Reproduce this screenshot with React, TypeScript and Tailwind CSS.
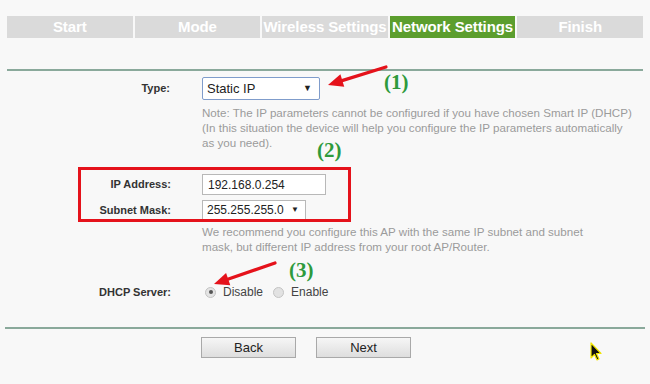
import React from "react";

const tabs = ["Start", "Mode", "Wireless Settings", "Network Settings", "Finish"];

function Arrow({ x1, y1, x2, y2 }: { x1: number; y1: number; x2: number; y2: number }) {
  const dx = x2 - x1;
  const dy = y2 - y1;
  const len = Math.sqrt(dx * dx + dy * dy);
  const ux = dx / len;
  const uy = dy / len;
  const hl = 15;
  const hw = 6.5;
  const bx = x2 - ux * hl;
  const by = y2 - uy * hl;
  const p1 = `${bx - uy * hw},${by + ux * hw}`;
  const p2 = `${bx + uy * hw},${by - ux * hw}`;
  return (
    <g>
      <line x1={x1} y1={y1} x2={bx + ux * 2} y2={by + uy * 2} stroke="#e5121b" strokeWidth={3.2} strokeLinecap="round" />
      <polygon points={`${x2},${y2} ${p1} ${p2}`} fill="#e5121b" />
    </g>
  );
}

export default function App() {
  return (
    <div
      className="relative w-[650px] h-[384px] overflow-hidden bg-[#f8f8f8] pt-[16px] text-[#333]"
      style={{ fontFamily: '"Liberation Sans", Arial, sans-serif' }}
    >
      {/* Tabs */}
      <div className="flex gap-[2px] px-[7px]">
        {tabs.map((t) => (
          <div
            key={t}
            className={
              "h-[22px] flex-1 flex items-center justify-center whitespace-nowrap text-[15px] font-bold text-white tracking-[-0.1px] " +
              (t === "Network Settings" ? "bg-[#5c9e2e]" : "bg-[#dadada]")
            }
          >
            {t}
          </div>
        ))}
      </div>

      {/* Top line */}
      <div className="mx-[7px] mt-[31px] h-[2px] bg-[#8aa99b]" />

      {/* Type row */}
      <div className="mt-[6px] flex items-center">
        <div className="w-[170px] text-right text-[11px] font-bold">Type:</div>
        <div className="ml-[32px] flex h-[23px] w-[118px] items-center justify-between rounded-[2px] border border-[#7f9ccb] bg-white pl-[4px] pr-[7px] text-[13px] text-[#222]">
          <span>Static IP</span>
          <span className="text-[9px]">▼</span>
        </div>
      </div>

      {/* Note */}
      <div className="ml-[202px] mt-[5px] w-[445px] text-[11.6px] leading-[15px] text-[#9b9b9b]">
        Note: The IP parameters cannot be configured if you have chosen Smart IP (DHCP)
        <br />
        (In this situation the device will help you configure the IP parameters automatically
        <br />
        as you need).
      </div>

      {/* IP Address */}
      <div className="mt-[24px] flex items-center">
        <div className="w-[171px] text-right text-[11px] font-bold">IP Address:</div>
        <div className="ml-[31px] flex h-[21px] w-[124px] items-center border border-[#b8b8b8] bg-white pl-[5px] text-[12px] text-[#222]">
          192.168.0.254
        </div>
      </div>

      {/* Subnet Mask */}
      <div className="mt-[5px] flex items-center">
        <div className="w-[171px] text-right text-[11px] font-bold">Subnet Mask:</div>
        <div className="ml-[31px] flex h-[20px] w-[104px] items-center justify-between border border-[#b8b8b8] bg-white pl-[4px] pr-[6px] text-[12px] text-[#222]">
          <span>255.255.255.0</span>
          <span className="text-[8px]">▼</span>
        </div>
      </div>

      {/* Recommend */}
      <div className="ml-[202px] mt-[4px] w-[430px] text-[11.6px] leading-[15px] text-[#9b9b9b]">
        We recommend you configure this AP with the same IP subnet and subnet
        <br />
        mask, but different IP address from your root AP/Router.
      </div>

      {/* DHCP */}
      <div className="mt-[30px] flex h-[16px] items-center">
        <div className="w-[171px] text-right text-[11px] font-bold">DHCP Server:</div>
        <div className="ml-[34px] flex items-center text-[12px] text-[#444]">
          <span className="flex h-[11px] w-[11px] items-center justify-center rounded-full border border-[#c4c4c4] bg-[#e4e4e4]">
            <span className="h-[4px] w-[4px] rounded-full bg-[#555]" />
          </span>
          <span className="ml-[7px]">Disable</span>
          <span className="ml-[10px] h-[11px] w-[11px] rounded-full border border-[#c4c4c4] bg-[#e2e2e2]" />
          <span className="ml-[7px]">Enable</span>
        </div>
      </div>

      {/* Bottom line */}
      <div className="mx-[5px] mt-[27px] h-[2px] bg-[#8aa99b]" />

      {/* Buttons */}
      <div className="ml-[201px] mt-[8px] flex gap-[20px]">
        <div className="flex h-[21px] w-[95px] items-center justify-center border border-[#a9a9a9] bg-gradient-to-b from-[#f6f6f6] to-[#dedede] text-[13px] text-[#222]">
          Back
        </div>
        <div className="flex h-[21px] w-[95px] items-center justify-center border border-[#a9a9a9] bg-gradient-to-b from-[#f6f6f6] to-[#dedede] text-[13px] text-[#222]">
          Next
        </div>
      </div>

      {/* Annotations overlay */}
      <div className="absolute left-[78px] top-[167px] h-[55px] w-[273px] border-[3px] border-[#e5121b]" />
      <div
        className="absolute left-[384px] top-[72px] text-[21px] font-bold leading-none text-[#2e9a3c]"
        style={{ fontFamily: '"Liberation Serif", "Times New Roman", serif' }}
      >
        (1)
      </div>
      <div
        className="absolute left-[317px] top-[140px] text-[21px] font-bold leading-none text-[#2e9a3c]"
        style={{ fontFamily: '"Liberation Serif", "Times New Roman", serif' }}
      >
        (2)
      </div>
      <div
        className="absolute left-[289px] top-[260px] text-[21px] font-bold leading-none text-[#2e9a3c]"
        style={{ fontFamily: '"Liberation Serif", "Times New Roman", serif' }}
      >
        (3)
      </div>
      <svg className="pointer-events-none absolute left-0 top-0" width="650" height="384">
        <Arrow x1={386} y1={67} x2={328} y2={85} />
        <Arrow x1={275} y1={263} x2={214} y2={284} />
        {/* mouse cursor */}
        <path
          d="M591 343 L591 358 L594.5 354.5 L597 360 L599 359 L596.5 353.5 L601 353.5 Z"
          fill="#111"
          stroke="#f2e600"
          strokeWidth={1.2}
          strokeLinejoin="round"
        />
      </svg>
    </div>
  );
}
